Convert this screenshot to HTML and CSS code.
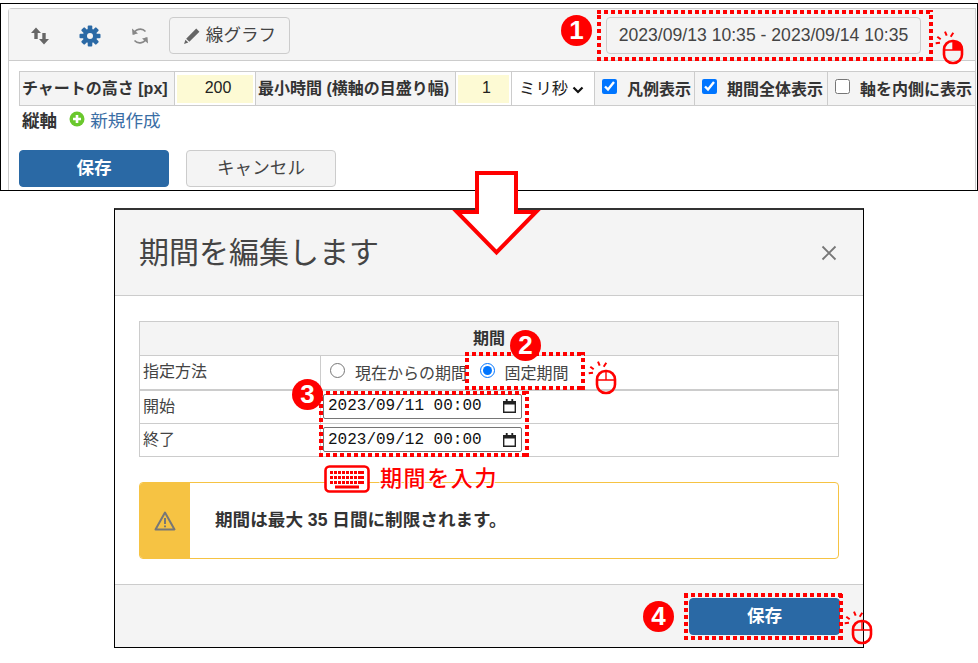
FILE: index.html
```html
<!DOCTYPE html>
<html lang="ja">
<head>
<meta charset="utf-8">
<title>期間を編集します</title>
<link rel="stylesheet" href="styles.css">
</head>
<body>
<div class="canvas">

  <section class="shot shot-top">
    <div class="card">
      <div class="toolbar">
        <div class="tools">
          <svg class="tool" width="20" height="20" viewBox="0 0 20 20"><path class="ic-gray" d="M6 1.500l5 5.500H7.700v6H4.300V7H1zM14 18.500l5-5.500h-3.300V7h-3.400v6H9z"/></svg>
          <svg class="tool" width="22" height="22" viewBox="0 0 22 22"><g class="ic-blue"><rect x="8.700" y="0.500" width="4.600" height="21" rx="1"/><rect x="8.700" y="0.500" width="4.600" height="21" rx="1" transform="rotate(45 11 11)"/><rect x="8.700" y="0.500" width="4.600" height="21" rx="1" transform="rotate(90 11 11)"/><rect x="8.700" y="0.500" width="4.600" height="21" rx="1" transform="rotate(135 11 11)"/><circle cx="11" cy="11" r="7.200"/></g><circle class="ic-hole" cx="11" cy="11" r="3"/></svg>
          <svg class="tool" width="20" height="20" viewBox="0 0 20 20"><path class="ic-line" d="M3.500 8.500A7 7 0 0 1 15.500 5.500M16.500 11.500A7 7 0 0 1 4.500 14.500"/><path class="ic-lightgray" d="M2 2.500L2.500 8.700 8 7.500zM18 17.500L17.500 11.300 12 12.500z"/></svg>
        </div>
        <button class="btn btn-tool"><svg width="18" height="18" viewBox="0 0 17 17"><path class="ic-gray" d="M12.500 1.500l3 3L6 14l-3-3zM2.300 12l2.700 2.700-4 1.300z"/></svg>線グラフ</button>
        <button class="btn btn-range">2023/09/13 10:35 - 2023/09/14 10:35</button>
      </div>
      <div class="card-body">
        <table class="opts">
          <colgroup><col class="c1"><col class="c2"><col class="c3"><col class="c4"><col class="c5"><col class="c6"><col class="c7"><col class="c8"></colgroup>
          <tr>
            <th>チャートの高さ [px]</th>
            <td class="pad"><div class="yellow">200</div></td>
            <th>最小時間 (横軸の目盛り幅)</th>
            <td class="pad"><div class="yellow">1</div></td>
            <td class="sel">ミリ秒<svg width="12" height="8" viewBox="0 0 12 8"><path class="ic-chev" d="M1.500 1.500L6 6l4.500-4.500"/></svg></td>
            <th class="chk"><input type="checkbox" checked><span>凡例表示</span></th>
            <th class="chk"><input type="checkbox" checked><span>期間全体表示</span></th>
            <th class="chk"><input type="checkbox"><span>軸を内側に表示</span></th>
          </tr>
        </table>
        <div class="axis">
          <strong>縦軸</strong>
          <svg width="16" height="16" viewBox="0 0 16 16"><circle class="ic-green" cx="8" cy="8" r="7.500"/><path class="ic-plus" d="M8 4v8M4 8h8"/></svg>
          <a class="link">新規作成</a>
        </div>
        <div class="actions">
          <button class="btn btn-primary btn-save">保存</button>
          <button class="btn btn-cancel">キャンセル</button>
        </div>
      </div>
    </div>
  </section>

  <section class="shot modal">
    <header class="modal-head">
      <h1>期間を編集します</h1>
      <svg width="16" height="16" viewBox="0 0 16 16"><path class="ic-close" d="M1.500 1.500l13 13M14.500 1.500l-13 13"/></svg>
    </header>
    <div class="modal-body">
      <table class="period">
        <colgroup><col class="p1"><col></colgroup>
        <tr><th colspan="2">期間</th></tr>
        <tr class="r-method">
          <td class="lbl">指定方法</td>
          <td class="radios">
            <label><input type="radio" name="m"><span>現在からの期間</span></label>
            <label><input type="radio" name="m" checked><span>固定期間</span></label>
          </td>
        </tr>
        <tr>
          <td class="lbl">開始</td>
          <td class="date-cell"><div class="date">2023/09/11 00:00<svg width="13" height="14" viewBox="0 0 14 15"><path class="ic-cal" d="M0 2h3V0h2v2h4V0h2v2h3v13H0zM1.500 6v7.500h11V6z"/></svg></div></td>
        </tr>
        <tr class="r-last">
          <td class="lbl">終了</td>
          <td class="date-cell"><div class="date">2023/09/12 00:00<svg width="13" height="14" viewBox="0 0 14 15"><path class="ic-cal" d="M0 2h3V0h2v2h4V0h2v2h3v13H0zM1.500 6v7.500h11V6z"/></svg></div></td>
        </tr>
      </table>
      <div class="alert">
        <div class="alert-side"><svg width="22" height="20" viewBox="0 0 22 20"><path class="ic-warn" d="M11 1.500L20.500 18.500H1.500z"/><path class="ic-warn-mark" d="M11 7v6M11 14.500v1.800"/></svg></div>
        <p>期間は最大 35 日間に制限されます。</p>
      </div>
    </div>
    <footer class="modal-foot">
      <button class="btn btn-primary btn-ok">保存</button>
    </footer>
  </section>

  <svg class="arrow" width="90" height="90" viewBox="0 0 90 90"><path class="ic-arrow" d="M25 3H64V42H84L44.500 82.500 5 42H25z"/></svg>

  <div class="dots d1"></div>
  <div class="dots d2"></div>
  <div class="dots d3"></div>
  <div class="dots d4"></div>

  <div class="badge b1">1</div>
  <div class="badge b2">2</div>
  <div class="badge b3">3</div>
  <div class="badge b4">4</div>

  <svg class="mouse m1" width="32" height="36" viewBox="0 0 32 36"><path class="ms-fill" d="M20 11.500h4.500a4.500 4.500 0 0 1 4.500 4.500v4H20z"/><path class="ms-line" d="M2.700 13.300L7 12.700M4.300 6.700L7.700 9.300M12 1.700L13.700 5.700M20.300 2.700L17.700 6.700"/><rect class="ms-body" x="11" y="11" width="18" height="22" rx="8.500"/><path class="ms-thin" d="M11 20H29M20 11V20"/></svg>
  <svg class="mouse m2" width="32" height="36" viewBox="0 0 32 36"><path class="ms-line" d="M2.700 13.300L7 12.700M4.300 6.700L7.700 9.300M12 1.700L13.700 5.700M20.300 2.700L17.700 6.700"/><rect class="ms-body" x="11" y="11" width="18" height="22" rx="8.500"/><path class="ms-thin" d="M11 20H29M20 11V20"/></svg>
  <svg class="mouse m3" width="32" height="36" viewBox="0 0 32 36"><path class="ms-line" d="M2.700 13.300L7 12.700M4.300 6.700L7.700 9.300M12 1.700L13.700 5.700M20.300 2.700L17.700 6.700"/><rect class="ms-body" x="11" y="11" width="18" height="22" rx="8.500"/><path class="ms-thin" d="M11 20H29M20 11V20"/></svg>

  <div class="kbd-note">
    <svg width="46" height="28" viewBox="0 0 46 28"><rect class="kb-frame" x="1.500" y="1.500" width="43" height="25" rx="4"/><g class="kb-keys"><rect x="6" y="6" width="34" height="3"/><rect x="6" y="11" width="34" height="3"/><rect x="6" y="16" width="34" height="3"/><rect x="11" y="20.500" width="24" height="3"/></g><path class="kb-gaps" d="M9.500 6v13M13.500 6v13M17.500 6v13M21.500 6v13M25.500 6v13M29.500 6v13M33.500 6v13"/></svg>
    <span>期間を入力</span>
  </div>

</div>
</body>
</html>
```

FILE: styles.css
```css
* { box-sizing: border-box; }
html, body { margin: 0; padding: 0; background: #fff; }
body {
  font-family: "Liberation Sans", "Noto Sans CJK JP", sans-serif;
  font-size: 16px;
  color: #333;
}
.canvas { position: relative; width: 978px; height: 663px; overflow: hidden; }

/* screenshots placed on the free canvas */
.shot { position: absolute; background: #fff; border: 1px solid #000; overflow: hidden; }
.shot-top { left: 0; top: 3px; width: 978px; height: 188px; padding: 4px 0 0 7px; }
.modal { left: 114px; top: 208px; width: 750px; height: 440px; display: flex; flex-direction: column; border-top: 2px solid #333; }

/* top card */
.card { height: 100%; margin-right: 1px; border: 1px solid #ccc; border-bottom: 0; border-radius: 4px 0 0 0; }
.toolbar {
  height: 52px; padding: 8px 54px 0 10px; background: #f4f4f4; border-bottom: 1px solid #ccc;
  display: flex; align-items: flex-start; justify-content: space-between;
}
.tools { display: flex; align-items: center; height: 37px; width: 150px; gap: 29px; padding-left: 11px; }
.tool { flex: none; }
.btn {
  font-family: inherit; font-size: 17.6px; color: #444; background: #f4f4f4;
  border: 1px solid #ccc; border-radius: 4px; height: 37px; padding: 0; line-height: 1;
}
.btn-tool { width: 121px; display: flex; align-items: center; justify-content: center; gap: 5px; margin-right: auto; }
.btn-range { width: 315px; }
.btn-primary { background: #2a69a5; border-color: #2a69a5; color: #fff; font-weight: 700; }

.card-body { padding: 10px 0 0 10px; }
table { border-collapse: collapse; }
.opts { table-layout: fixed; width: 957px; height: 34px; }
.opts th, .opts td { border: 1px solid #ccc; height: 34px; padding: 0; white-space: nowrap; overflow: hidden; }
.opts th { background: #f4f4f4; font-weight: 700; color: #333; font-size: 16px; text-align: left; padding: 0 0 3px 2px; }
.c1 { width: 155px; } .c2 { width: 81px; } .c3 { width: 200px; } .c4 { width: 56px; }
.c5 { width: 83px; } .c6 { width: 100px; } .c7 { width: 133px; } .c8 { width: 148px; }
.opts td.pad { padding: 2px; }
.yellow { height: 28px; background: #fdfad4; text-align: center; line-height: 26px; color: #222; padding-left: 6px; }
.opts td.sel { color: #222; padding: 0 0 3px 7px; font-size: 16.4px; }
.sel svg { margin-left: 4px; }
.opts th.chk { padding: 0 0 2px 7px; }
.chk input { width: 15px; height: 15px; margin: 0 10px 0 0; vertical-align: 1px; }
.axis { height: 30px; padding: 0 0 4px 3px; display: flex; align-items: center; gap: 5px; font-size: 17.6px; color: #333; }
.axis strong { margin-right: 7px; }
.link { color: #3a6ea5; }
.actions { display: flex; gap: 17px; margin-top: 14px; }
.btn-save { width: 150px; }
.btn-cancel { width: 150px; }

/* modal */
.modal-head {
  height: 86px; flex: none; background: #f4f4f4; border-bottom: 1px solid #ccc;
  display: flex; align-items: center; justify-content: space-between; padding: 0 26px 0 24px;
}
.modal-head h1 { margin: 0 0 6px; font-size: 30px; font-weight: 400; color: #444; }
.modal-body { flex: 1; padding: 25px 24px 0; }
.period { width: 700px; table-layout: fixed; }
.period th, .period td { border: 1px solid #ccc; height: 34px; padding: 0 3px; color: #444; }
.period th { background: #f4f4f4; font-weight: 700; text-align: center; color: #333; padding-bottom: 3px; }
.period td.lbl { padding-bottom: 4px; }
.period .r-last td { height: 33px; }
.p1 { width: 181px; }
.r-method td { border-bottom: 2px solid #ccc; }
.radios { white-space: nowrap; }
.radios label { display: inline-block; margin-left: 1px; }
.radios label + label { margin-left: 4px; }
.radios input { width: 15px; height: 15px; margin: 0 10px 0 5px; vertical-align: 1px; }
.radios label + label input { margin-right: 9px; }
.period td.date-cell { padding: 0 2px 1px; }
.date {
  width: 199px; height: 25px; border: 1px solid #767676; border-radius: 2px;
  font-family: "Liberation Mono", monospace; font-size: 16px; color: #111;
  display: flex; align-items: center; justify-content: space-between; padding: 0 5px 0 4px;
}
.alert { margin-top: 25px; height: 77px; border: 1px solid #f6c343; border-radius: 4px; display: flex; align-items: center; overflow: hidden; }
.alert-side { width: 50px; height: 100%; background: #f6c343; display: flex; align-items: center; justify-content: center; }
.alert p { margin: 0 0 5px 25px; font-size: 17.6px; font-weight: 700; color: #333; }
.modal-foot { flex: none; height: 63px; background: #f4f4f4; border-top: 1px solid #ccc; padding: 13px 23px 0 0; display: flex; justify-content: flex-end; align-items: flex-start; }
.btn-ok { width: 151px; }

/* icons */
.ic-gray { fill: #666; }
.ic-lightgray { fill: #888; }
.ic-line { fill: none; stroke: #888; stroke-width: 1.6; }
.ic-blue { fill: #2a69a5; }
.ic-hole { fill: #f4f4f4; }
.ic-chev { fill: none; stroke: #111; stroke-width: 2.2; }
.ic-green { fill: #6ac82d; }
.ic-plus { stroke: #fff; stroke-width: 2.6; }
.ic-close { stroke: #777; stroke-width: 1.8; fill: none; }
.ic-cal { fill: #222; }
.ic-warn { fill: none; stroke: #777; stroke-width: 2; stroke-linejoin: round; }
.ic-warn-mark { stroke: #777; stroke-width: 2; fill: none; }
.ic-arrow { fill: #fff; stroke: #f00; stroke-width: 4; }

/* annotations lying over the screenshots */
.arrow { position: absolute; left: 452px; top: 170px; overflow: visible; }
.dots {
  position: absolute;
  background:
    repeating-linear-gradient(90deg, #f00 0 4px, transparent 4px 7px) left top / 100% 4px no-repeat,
    repeating-linear-gradient(90deg, #f00 0 4px, transparent 4px 7px) left bottom / 100% 4px no-repeat,
    repeating-linear-gradient(0deg, #f00 0 4px, transparent 4px 7px) left top / 4px 100% no-repeat,
    repeating-linear-gradient(0deg, #f00 0 4px, transparent 4px 7px) right top / 4px 100% no-repeat;
}
.d1 { left: 597px; top: 10px; width: 336px; height: 51px; }
.d2 { left: 465px; top: 352px; width: 120px; height: 38px; }
.d3 { left: 319px; top: 391px; width: 210px; height: 66px; }
.d4 { left: 684px; top: 593px; width: 159px; height: 47px; }
.badge {
  position: absolute; width: 31px; height: 31px; border-radius: 50%; background: #f00; color: #fff;
  font-weight: 700; font-size: 26px; line-height: 31px; text-align: center;
}
.b1 { left: 561px; top: 15px; }
.b2 { left: 510px; top: 330px; }
.b3 { left: 292px; top: 379px; }
.b4 { left: 643px; top: 601px; }
.mouse { position: absolute; overflow: visible; }
.m1 { left: 933px; top: 30px; }
.m2 { left: 586px; top: 360px; }
.m3 { left: 842px; top: 610px; }
.ms-body { fill: none; stroke: #f00; stroke-width: 2.6; }
.ms-line { stroke: #f00; stroke-width: 2; fill: none; }
.ms-thin { stroke: #f00; stroke-width: 1.4; fill: none; }
.ms-fill { fill: #f00; }
.kbd-note { position: absolute; left: 324px; top: 464px; display: flex; align-items: center; gap: 10px; }
.kbd-note svg { margin-top: 1px; }
.kbd-note span {
  color: #f00; font-size: 22px; font-weight: 500; letter-spacing: 1.6px; line-height: 28px;
  text-shadow: 1px 0 #fff, -1px 0 #fff, 0 1px #fff, 0 -1px #fff;
}
.kb-frame { fill: #fff; stroke: #f00; stroke-width: 2.6; }
.kb-keys { fill: #f00; }
.kb-gaps { stroke: #fff; stroke-width: 1; }
```
